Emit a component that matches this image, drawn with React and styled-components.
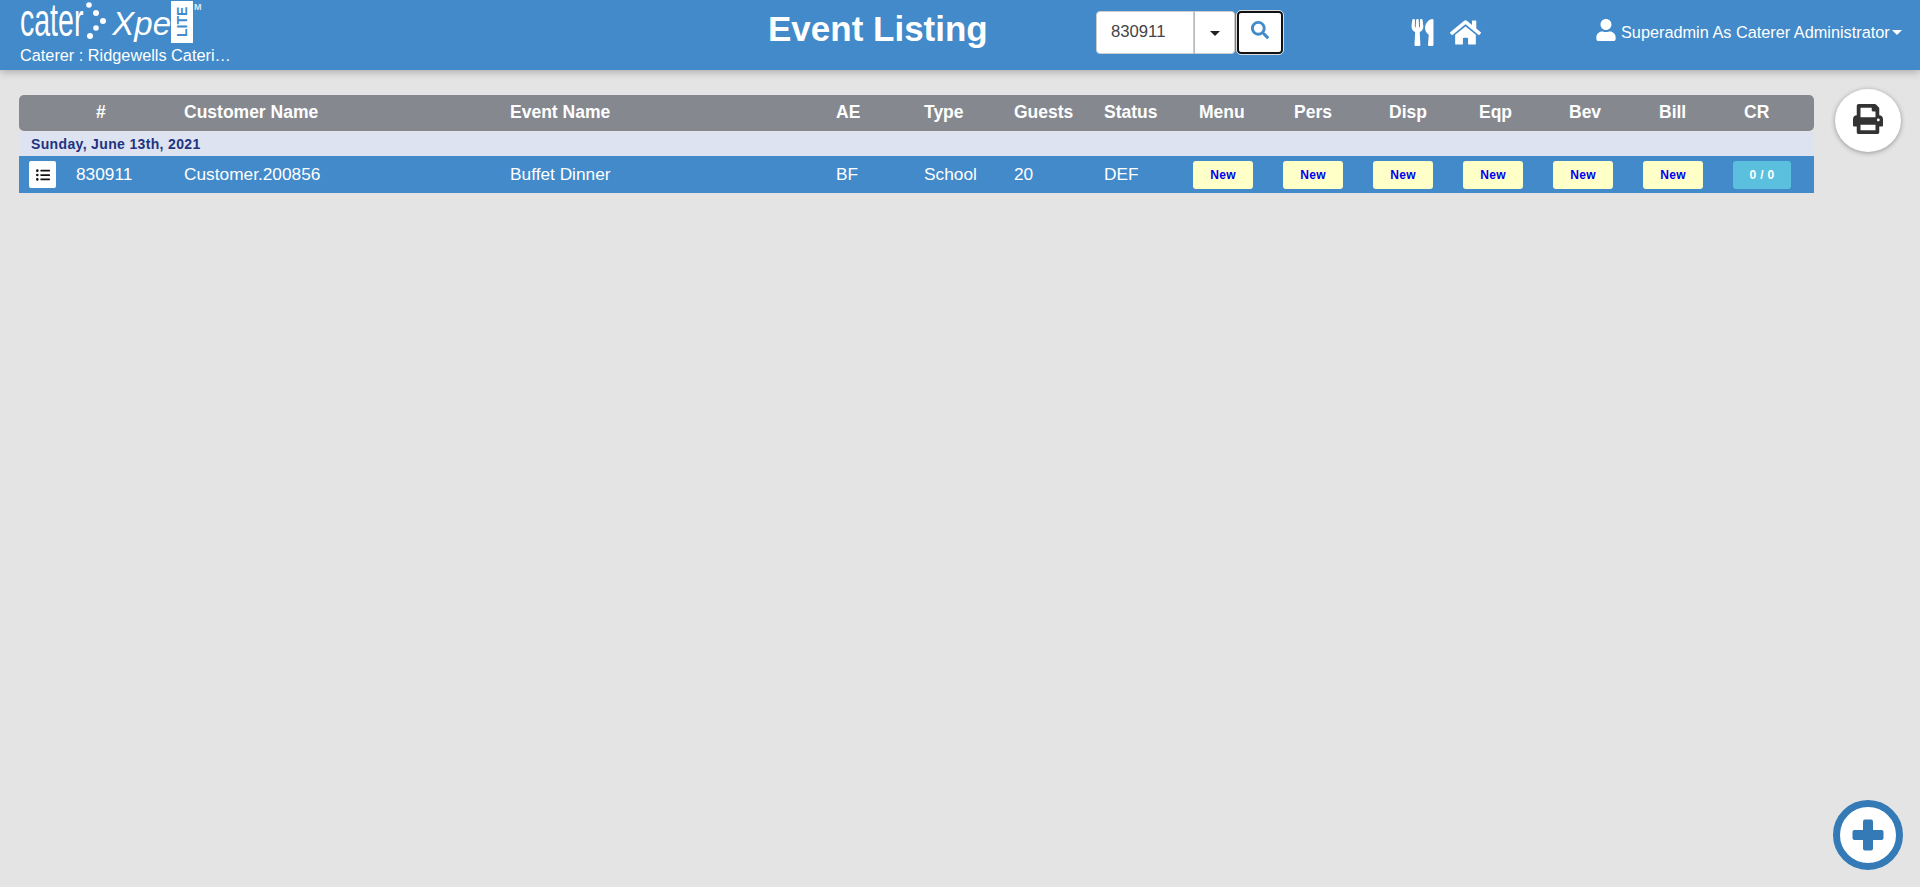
import React from "react";
import styled, { createGlobalStyle } from "styled-components";
import { FaUtensils, FaHome, FaUser, FaSearch, FaListUl, FaPrint } from "react-icons/fa";

const Global = createGlobalStyle`
  html, body { margin: 0; padding: 0; height: 100%; background: #e4e4e4; overflow: hidden; }
  body { font-family: "Liberation Sans", Arial, sans-serif; }
  #root { height: 100%; }
`;

const Page = styled.div`
  height: 887px;
  display: flex;
  flex-direction: column;
  background: #e4e4e4;
  position: relative;
`;

const Header = styled.header`
  height: 70px;
  flex: none;
  box-sizing: border-box;
  padding-bottom: 7px;
  background: #428aca;
  box-shadow: 0 2px 8px rgba(0, 0, 0, 0.25);
  display: grid;
  grid-template-columns: 640px 456px 313px 186px 1fr;
  align-items: center;
  color: #fff;
`;

const Brand = styled.div`
  align-self: start;
  padding-left: 20px;
  display: flex;
  flex-direction: column;
`;

const Logo = styled.div`
  height: 46px;
  display: flex;
  align-items: flex-start;
  position: relative;
`;

const LogoCater = styled.span`
  font-size: 46px;
  line-height: 46px;
  margin: -3px -38px 0 0;
  transform: scaleX(0.62);
  transform-origin: left;
  flex: none;
  display: inline-block;
`;

const LogoDots = styled.svg`
  width: 26px;
  height: 40px;
  flex: none;
  fill: #fff;
`;

const LogoX = styled.span`
  font-size: 33px;
  line-height: 36px;
  margin: 6px 0 0 2px;
  font-style: italic;
  white-space: nowrap;
`;

const LiteBadge = styled.span`
  position: absolute;
  left: 151px;
  top: 1px;
  width: 22px;
  height: 42px;
  background: #fff;
  color: #428aca;
  font-size: 14px;
  font-weight: 700;
  writing-mode: vertical-rl;
  transform: rotate(180deg);
  display: flex;
  align-items: center;
  justify-content: center;
`;

const Tm = styled.span`
  position: absolute;
  left: 174px;
  top: 2px;
  font-size: 9px;
  font-weight: 700;
  color: #dfe9f3;
`;

const Caterer = styled.div`
  font-size: 16.3px;
  line-height: 18px;
  white-space: nowrap;
`;

const Title = styled.h1`
  margin: 0;
  font-size: 35px;
  font-weight: 700;
  line-height: 1;
  padding: 0 0 7px 128px;
`;

const Search = styled.div`
  display: flex;
  align-items: stretch;
  height: 43px;
`;

const SearchInput = styled.div`
  width: 98px;
  box-sizing: border-box;
  background: #fff;
  border: 1px solid #ccc;
  border-radius: 4px 0 0 4px;
  color: #444;
  font-size: 16.7px;
  padding-left: 14px;
  display: flex;
  align-items: center;
`;

const Caret = styled.span`
  width: 0;
  height: 0;
  margin-left: ${(p) => p.$gap || 0}px;
  border-left: 5px solid transparent;
  border-right: 5px solid transparent;
  border-top: 5px solid ${(p) => p.$color};
`;

const DropButton = styled.div`
  width: 41px;
  background: #fff;
  border: 1px solid #ccc;
  border-left: 1px solid #bbb;
  border-radius: 0 4px 4px 0;
  display: flex;
  align-items: center;
  justify-content: center;
  padding-top: 2px;
  box-sizing: border-box;
`;

const SearchButton = styled.div`
  width: 46px;
  margin-left: 2px;
  box-sizing: border-box;
  background: #fff;
  border: 2px solid #111;
  outline: 1px solid #ddd;
  border-radius: 4px;
  color: #428aca;
  font-size: 18px;
  display: flex;
  align-items: center;
  justify-content: center;
  padding-bottom: 4px;
`;

const NavIcons = styled.div`
  display: flex;
  align-items: center;
  gap: 14px;
  font-size: 27px;
`;

const HomeIcon = styled(FaHome)`
  font-size: 31px;
`;

const User = styled.div`
  display: flex;
  align-items: center;
  font-size: 16.3px;
  white-space: nowrap;
`;

const UserIcon = styled(FaUser)`
  font-size: 22px;
  margin-right: 4px;
  position: relative;
  top: -2px;
`;

const Content = styled.main`
  display: flex;
  padding: 25px 0 0 19px;
  align-items: flex-start;
`;

const Table = styled.div`
  width: 1795px;
  flex: none;
`;

const Head = styled.div`
  display: grid;
  grid-template-columns: 38px 127px 326px 326px 88px 90px 90px 90px repeat(6, 90px) 1fr;
  height: 36px;
  box-sizing: border-box;
  padding-bottom: 2px;
  align-items: center;
  background: #85888f;
  border-radius: 5px;
  color: #fff;
  font-size: 17.5px;
  font-weight: 700;
  margin-bottom: 1px;
`;

const HeadCell = styled.div`
  white-space: nowrap;
  padding-left: ${(p) => p.$pad}px;
`;

const DateRow = styled.div`
  height: 24px;
  background: #dde3f1;
  color: #22337f;
  font-size: 14px;
  font-weight: 700;
  line-height: 24px;
  padding-left: 12px;
  letter-spacing: 0.35px;
`;

const Row = styled.div`
  display: grid;
  grid-template-columns: 57px 108px 326px 326px 88px 90px 90px 89px repeat(6, 90px) 1fr;
  height: 37px;
  align-items: center;
  background: #428aca;
  color: #fff;
  font-size: 17.3px;
`;

const ListButton = styled.div`
  width: 27px;
  height: 27px;
  margin-left: 10px;
  background: #fff;
  border-radius: 2px;
  color: #111;
  font-size: 14px;
  display: flex;
  align-items: center;
  justify-content: center;
`;

const NewButton = styled.div`
  width: 60px;
  height: 28px;
  border-radius: 3px;
  background: #ffffc8;
  color: #0000f0;
  font-size: 12px;
  font-weight: 700;
  letter-spacing: 0.3px;
  display: flex;
  align-items: center;
  justify-content: center;
`;

const CrButton = styled(NewButton)`
  width: 58px;
  background: #5bc0de;
  color: #fff;
`;

const PrintButton = styled.div`
  width: 66px;
  height: 63px;
  box-sizing: border-box;
  padding-bottom: 4px;
  margin: -6px 0 0 21px;
  border-radius: 50%;
  background: #fff;
  box-shadow: 0 1px 5px rgba(0, 0, 0, 0.35);
  color: #333;
  font-size: 30px;
  display: flex;
  align-items: center;
  justify-content: center;
  flex: none;
`;

const AddButton = styled.div`
  position: absolute;
  right: 17px;
  bottom: 17px;
  width: 70px;
  height: 70px;
  box-sizing: border-box;
  border-radius: 50%;
  background: #fff;
  border: 7px solid #337ab7;
  display: flex;
  align-items: center;
  justify-content: center;
`;

const PlusIcon = styled.svg`
  width: 32px;
  height: 32px;
  fill: #337ab7;
`;

const headers = [
  ["", 0], ["#", 39], ["Customer Name", 0], ["Event Name", 0], ["AE", 0], ["Type", 0], ["Guests", 0], ["Status", 0],
  ["Menu", 5], ["Pers", 10], ["Disp", 15], ["Eqp", 15], ["Bev", 15], ["Bill", 15], ["CR", 10],
];

const data = ["830911", "Customer.200856", "Buffet Dinner", "BF", "School", "20", "DEF"];

export default function App() {
  return (
    <Page>
      <Global />
      <Header>
        <Brand>
          <Logo>
            <LogoCater>cater</LogoCater>
            <LogoDots viewBox="0 0 26 40">
              <circle cx="5" cy="5" r="2.8" />
              <circle cx="12" cy="13" r="3" />
              <circle cx="19" cy="21" r="3" />
              <circle cx="12" cy="28" r="2.8" />
              <circle cx="6" cy="36" r="3" />
            </LogoDots>
            <LogoX>Xpert</LogoX>
            <LiteBadge>LITE</LiteBadge>
            <Tm>M</Tm>
          </Logo>
          <Caterer>Caterer : Ridgewells Cateri…</Caterer>
        </Brand>
        <Title>Event Listing</Title>
        <Search>
          <SearchInput>830911</SearchInput>
          <DropButton><Caret $color="#222" /></DropButton>
          <SearchButton><FaSearch /></SearchButton>
        </Search>
        <NavIcons>
          <FaUtensils />
          <HomeIcon />
        </NavIcons>
        <User>
          <UserIcon />
          Superadmin As Caterer Administrator
          <Caret $color="#fff" $gap={2} />
        </User>
      </Header>
      <Content>
        <Table>
          <Head>
            {headers.map(([label, pad], i) => (
              <HeadCell key={i} $pad={pad}>{label}</HeadCell>
            ))}
          </Head>
          <DateRow>Sunday, June 13th, 2021</DateRow>
          <Row>
            <ListButton><FaListUl /></ListButton>
            {data.map((d) => <div key={d}>{d}</div>)}
            {[0, 1, 2, 3, 4, 5].map((i) => <NewButton key={i}>New</NewButton>)}
            <CrButton>0 / 0</CrButton>
          </Row>
        </Table>
        <PrintButton><FaPrint /></PrintButton>
      </Content>
      <AddButton>
        <PlusIcon viewBox="0 0 32 32">
          <rect x="11" y="0.5" width="10" height="31" rx="2" />
          <rect x="0.5" y="11" width="31" height="10" rx="2" />
        </PlusIcon>
      </AddButton>
    </Page>
  );
}
